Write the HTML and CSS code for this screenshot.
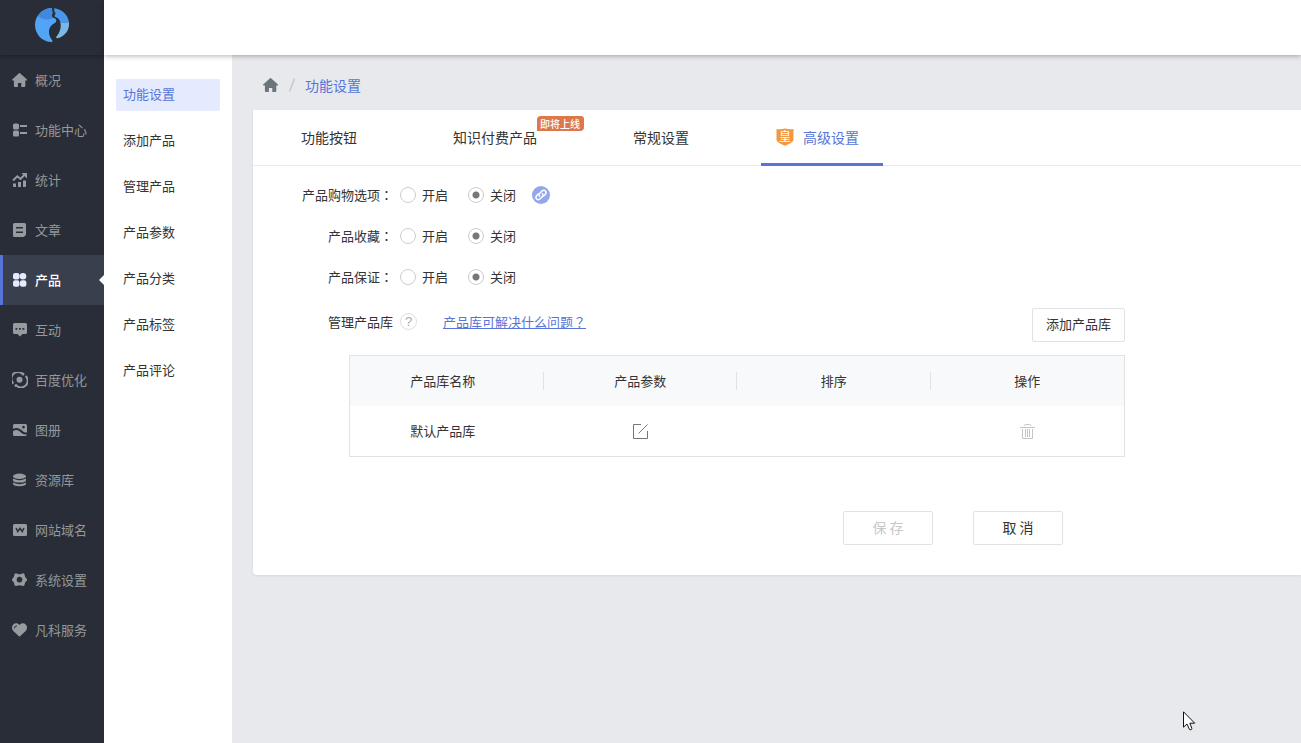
FILE: index.html
```html
<!DOCTYPE html>
<html lang="zh-CN">
<head>
  <meta charset="UTF-8">
  <meta name="viewport" content="width=device-width, initial-scale=1">
  <title>功能设置</title>
  <link rel="stylesheet" href="styles.css">
</head>
<body>
  <aside class="sidebar">
    <div class="logo">
      <svg width="36" height="36" viewBox="0 0 36 36">
        <path fill="#52a5f6" d="M18 1C8 1 1 9 1 18s7 17 16.500 17c1 0 1.300-.6.800-1.500-5-6.500-4.500-14 2.500-17.500 2.300-1.300 1.700-4-.3-4.700-2.500-.6-3.800-1.800-3-3.300 1.200-1.700.8-2.200.3-3.700z"/>
        <path fill="#4189e0" d="M18 1C12 1 7 4.500 4 9c3 3 10 4.500 14 2.500.8-.5 1-.7 1.500-.7-1.500-.8-2-1.800-1.500-2.800 1.200-1.700.8-2.200.3-3.700z"/>
        <path fill="#4a97ee" d="M20 1.200c8 .8 14 6.300 15 14.300-2.500.5-5.500.3-8.500 0-.8-2.500-2-4.500-4.700-5.300-1.500-.5-1.600-1.200-.9-2.200 1-1.500.5-2.500-.5-3.500z"/>
        <path fill="#7ab9e6" d="M26.300 15.300c3 .5 6 .5 8.700 0 .8 8-4.500 14.500-11.500 15.900-1.200.2-1.700-.8-1-1.700C26 25.500 27.500 20.500 26.300 15.300z"/>
      </svg>
    </div>
    <nav class="menu">
      <a href="#"><svg viewBox="0 0 16 16"><path d="M7.500.7 15 7.500c.3.500 0 .9-.5.900H13.300V14q0 .9-.9.900H9.300V11H5.900v3.900H2.800q-.9 0-.9-.9V8.400H.6c-.6 0-.8-.5-.4-.9z"/></svg>概况</a>
      <a href="#"><svg viewBox="0 0 16 16"><rect x="1" y="1.500" width="6" height="6" rx="1.500"/><rect x="1" y="8.500" width="6" height="6" rx="1.500"/><rect x="8" y="3" width="7" height="2"/><rect x="8" y="10" width="7" height="2"/></svg>功能中心</a>
      <a href="#"><svg viewBox="0 0 16 16"><path d="M1 11.500h3V15H2q-1 0-1-1zM6 10h3v5H6zM11 8.500h3V14q0 1-1 1h-2z"/><path class="line" d="M1 8.500 5.300 4.300 8.500 7 13 2.300"/><path d="M9.500 1H15v5.500z"/></svg>统计</a>
      <a href="#"><svg viewBox="0 0 16 16"><path fill-rule="evenodd" d="M2.500 1h10Q14 1 14 2.500V12q0 2-2.500 3h-9Q1 15 1 13.500v-11Q1 1 2.500 1zM4 5v1.500h7V5zm0 4.500V11h7V9.500z"/></svg>文章</a>
      <a href="#" class="active"><svg viewBox="0 0 16 16"><rect x="1" y="1" width="6.500" height="6.500" rx="2.200"/><circle cx="11" cy="4.200" r="3.300"/><rect x="1" y="8.300" width="6.500" height="6.500" rx="2.200"/><rect x="7.900" y="8.300" width="6.500" height="6.500" rx="2.200"/></svg>产品</a>
      <a href="#"><svg viewBox="0 0 16 16"><path fill-rule="evenodd" d="M2.500 1h11Q15 1 15 2.500v8Q15 12 13.500 12H10.500L8 14.500 5.500 12h-3Q1 12 1 10.500v-8Q1 1 2.500 1zM3.500 6v1.800h1.800V6zm3.500 0v1.800h1.800V6zm3.500 0v1.800h1.800V6z"/></svg>互动</a>
      <a href="#"><svg viewBox="0 0 16 16"><circle cx="7.500" cy="7.700" r="3"/><path class="line" d="M1.400 11.500A6.600 6.600 0 0 1 10 1.500M13.600 4A6.600 6.600 0 0 1 5 14"/><circle cx="11" cy="2" r="1.500"/><circle cx="4" cy="13.400" r="1.500"/></svg>百度优化</a>
      <a href="#"><svg viewBox="0 0 16 16"><path fill-rule="evenodd" d="M2.500 2h11Q15 2 15 3.500v6.700c-2 .8-3.500-.2-5-1.700C7.500 6 4.500 5.300 1 6.800V3.500Q1 2 2.500 2zM11.500 3.700a1.400 1.400 0 1 0 .01 0z"/><path d="M1 9.300C4 7.300 6.300 8 8.300 10s4 3 6.700 2.300Q14.700 14 13.500 14h-11Q1 14 1 12.500z"/></svg>图册</a>
      <a href="#"><svg viewBox="0 0 16 16"><ellipse cx="7.500" cy="4.300" rx="6.500" ry="2.700"/><path d="M1 6.500q6.500 3.500 13 0v1.700q0 2.300-6.500 2.300T1 8.200zM1 10.500q6.500 3.300 13 0v1.300q0 2.400-6.500 2.400T1 11.800z"/></svg>资源库</a>
      <a href="#"><svg viewBox="0 0 16 16"><rect x="1" y="2" width="14" height="12" rx="1.500"/><path class="cut" d="M4 6 5.800 9.500 8 6.300l2.200 3.200L12 6"/></svg>网站域名</a>
      <a href="#"><svg viewBox="0 0 16 16"><path fill-rule="evenodd" d="M4 1.300 6 2q1.500.5 3 0l2-.7q1 0 1.500 1L13 4.500q.3.900 1 1.400 1 .8 1 1.800T14 9.500q-.7.500-1 1.400l-.5 2q-.5 1-1.500 1.200l-2-.5q-1.500-.5-3 0L4 14.100q-1-.2-1.500-1.200L2 10.900q-.3-.9-1-1.400-1-.8-1-1.800T1 5.900q.7-.5 1-1.400l.5-2.200q.5-1 1.500-1zM7.500 4.800a2.900 2.900 0 1 0 .01 0z"/></svg>系统设置</a>
      <a href="#"><svg viewBox="0 0 16 16"><path d="M7.500 3C9 1 12 .8 13.700 2.500S15.500 7 13.700 9L7.500 14.800 1.300 9C-.5 7-.4 4.200 1.300 2.500S6 1 7.500 3z"/><path class="cut thin" d="M2.300 6.500Q2.300 4 5 3.800"/></svg>凡科服务</a>
    </nav>
  </aside>

  <div class="page">
    <header class="topbar"></header>
    <div class="content">
      <nav class="submenu">
        <a href="#" class="active">功能设置</a>
        <a href="#">添加产品</a>
        <a href="#">管理产品</a>
        <a href="#">产品参数</a>
        <a href="#">产品分类</a>
        <a href="#">产品标签</a>
        <a href="#">产品评论</a>
      </nav>

      <main>
        <div class="breadcrumb">
          <a href="#" aria-label="首页"><svg width="16" height="16" viewBox="0 0 16 16"><path fill="#6b757c" d="M7.500.7 15 7.500c.3.500 0 .9-.5.900H13.300V14q0 .9-.9.900H9.300V11H5.900v3.900H2.800q-.9 0-.9-.9V8.400H.6c-.6 0-.8-.5-.4-.9z"/></svg></a>
          <svg width="8" height="14" viewBox="0 0 8 14"><path d="M6.500.5 1.500 13.500" stroke="#c6c8cb" stroke-width="1.500"/></svg>
          <a href="#">功能设置</a>
        </div>

        <section class="card">
          <div class="tabs">
            <a href="#">功能按钮</a>
            <a href="#">知识付费产品<span class="badge">即将上线</span></a>
            <a href="#">常规设置</a>
            <a href="#" class="active">
              <svg width="18" height="18" viewBox="0 0 18 18"><path fill="#f2993f" d="M.5 1q4 .8 8.500-.5Q13.500 1.800 17.500 1v11q-1 3-8.500 5.700Q1.500 15 .5 12z"/><text x="9" y="13" text-anchor="middle">皇</text></svg>高级设置
            </a>
          </div>

          <form class="settings">
            <fieldset>
              <legend>产品购物选项<span class="mark">：</span></legend>
              <label><input type="radio" name="shopping">开启</label>
              <label><input type="radio" name="shopping" checked>关闭</label>
              <a href="#" class="jump" aria-label="相关链接"><svg width="18" height="18" viewBox="0 0 18 18"><circle cx="9" cy="9" r="9" fill="#93a8ea"/><g fill="none" stroke="#fff" stroke-width="1.500" stroke-linecap="round"><path d="M7.700 10.300C6.300 9 7 8 8 7l1.800-1.800c2.700-2.300 5.700.7 3.400 3.200L11.700 10"/><path d="M10.300 7.700C11.700 9 11 10 10 11l-1.800 1.800c-2.700 2.300-5.700-.7-3.400-3.200L6.300 8"/></g></svg></a>
            </fieldset>
            <fieldset>
              <legend>产品收藏<span class="mark">：</span></legend>
              <label><input type="radio" name="favorite">开启</label>
              <label><input type="radio" name="favorite" checked>关闭</label>
            </fieldset>
            <fieldset>
              <legend>产品保证<span class="mark">：</span></legend>
              <label><input type="radio" name="guarantee">开启</label>
              <label><input type="radio" name="guarantee" checked>关闭</label>
            </fieldset>

            <div class="library-head">
              <span class="library-title">管理产品库</span>
              <button type="button" class="help" aria-label="帮助">?</button>
              <a href="#">产品库可解决什么问题<span class="mark">？</span></a>
              <button type="button" class="btn add">添加产品库</button>
            </div>

            <table>
              <thead>
                <tr><th>产品库名称</th><th>产品参数</th><th>排序</th><th>操作</th></tr>
              </thead>
              <tbody>
                <tr>
                  <td>默认产品库</td>
                  <td><button type="button" class="icon-btn" aria-label="编辑"><svg width="16" height="16" viewBox="0 0 16 16" fill="none" stroke="#777"><path d="M8 .5H.5v14h14V7"/><path d="M5.500 9.500 14.500.5"/></svg></button></td>
                  <td></td>
                  <td><button type="button" class="icon-btn" aria-label="删除"><svg width="16" height="16" viewBox="0 0 16 16" fill="none" stroke="#c4c4c4"><path d="M0 3.500h15M4 2Q4.500.5 5.500.5h4q1 0 1.500 1.500M2.500 5v9.500h10V5M5.500 5v8M7.500 5v8M9.500 5v8"/></svg></button></td>
                </tr>
              </tbody>
            </table>

            <div class="actions">
              <button type="submit" class="btn" disabled>保 存</button>
              <button type="button" class="btn">取 消</button>
            </div>
          </form>
        </section>
      </main>
    </div>
  </div>

  <svg class="cursor" width="13" height="20" viewBox="0 0 13 20"><path fill="#fff" stroke="#111" d="M.5.800v15.400l3.500-3.200 2.500 5.500q1.500 1 2.500-.8L6.800 12.200h4.900z"/></svg>
</body>
</html>
```
FILE: styles.css
```css
* {
  box-sizing: border-box;
}
body {
  margin: 0;
  display: flex;
  min-height: 100vh;
  font-family: "Noto Sans CJK SC", sans-serif;
  font-size: 13px;
  line-height: 20px;
  color: #333;
  background: #e8e9ed;
}
a {
  color: inherit;
  text-decoration: none;
}
button, input {
  font: inherit;
  color: inherit;
}
svg {
  display: block;
  flex: none;
}

/* left navigation */
.sidebar {
  width: 104px;
  flex: none;
  background: #282d38;
}
.logo {
  height: 55px;
  display: flex;
  justify-content: center;
  padding-top: 7px;
  box-shadow: 0 2px 4px rgba(0, 0, 0, 0.25);
}
.menu a {
  position: relative;
  display: flex;
  align-items: center;
  gap: 7px;
  height: 50px;
  padding-left: 9px;
  border-left: 3px solid transparent;
  color: #94989b;
}
.menu svg {
  width: 16px;
  height: 16px;
  fill: #959b9e;
}
.menu .line {
  fill: none;
  stroke: #959b9e;
  stroke-width: 2;
}
.menu .cut {
  fill: none;
  stroke: #282d38;
  stroke-width: 1.5;
}
.menu .thin {
  stroke-width: 1;
}
.menu .active {
  background: #393f4d;
  border-color: #5874d8;
  color: #fff;
  font-weight: 500;
}
.menu .active svg {
  fill: #e6eaff;
}
.menu .active::after {
  content: "";
  position: absolute;
  right: 0;
  top: 20px;
  border: 5px solid transparent;
  border-left: 0;
  border-right-color: #fff;
}

/* page */
.page {
  flex: 1;
  min-width: 0;
  display: flex;
  flex-direction: column;
}
.topbar {
  position: relative;
  z-index: 1;
  height: 55px;
  background: #fff;
  box-shadow: 0 1px 5px rgba(0, 0, 0, 0.3);
}
.content {
  flex: 1;
  display: flex;
}
.submenu {
  width: 128px;
  flex: none;
  display: flex;
  flex-direction: column;
  gap: 14px;
  padding: 24px 12px;
  background: #fff;
}
.submenu a {
  padding: 5px 7px 7px;
  border-radius: 2px;
}
.submenu .active {
  background: #e6eaff;
  color: #5874d8;
}
main {
  flex: 1;
  min-width: 0;
  padding-left: 21px;
}
.breadcrumb {
  display: flex;
  align-items: center;
  gap: 9px;
  height: 55px;
  padding: 4px 0 0 10px;
  font-size: 14px;
  color: #5874d8;
}
.card {
  background: #fff;
  border-radius: 0 0 0 4px;
  box-shadow: 0 1px 3px rgba(0, 0, 0, 0.08);
}

/* tabs */
.tabs {
  display: flex;
  gap: 96px;
  height: 56px;
  padding-left: 48px;
  border-bottom: 1px solid #e8e9ed;
  font-size: 14px;
}
.tabs a {
  position: relative;
  display: flex;
  align-items: center;
  height: 56px;
  padding-bottom: 2px;
}
.tabs .active {
  gap: 9px;
  margin-left: -24px;
  padding-left: 15px;
  padding-right: 24px;
  color: #5874d8;
  box-shadow: inset 0 -3px #5874d8;
}
.tabs svg {
  overflow: visible;
}
.tabs text {
  font-size: 12px;
  fill: #fff;
}
.badge {
  position: absolute;
  top: 6px;
  left: 84px;
  padding: 0 4px 0 3px;
  border-radius: 4px 3px 4px 0;
  background: #de774b;
  color: #fff;
  font-size: 10px;
  font-weight: 500;
  line-height: 15px;
  white-space: nowrap;
}

/* settings form */
.settings {
  max-width: 872px;
  padding: 19px 0 30px 48px;
}
fieldset {
  display: flex;
  align-items: center;
  height: 20px;
  margin: 0 0 21px;
  padding: 0;
  border: 0;
}
legend {
  float: left;
  width: 92px;
  padding: 0;
  text-align: right;
  white-space: nowrap;
}
/* centred full-width punctuation */
.mark {
  font-family: "Noto Sans CJK TC", sans-serif;
  font-feature-settings: "locl" 0;
}
label {
  display: flex;
  align-items: center;
  gap: 6px;
  margin-right: 20px;
}
legend + label {
  margin-left: 7px;
}
input[type="radio"] {
  appearance: none;
  width: 16px;
  height: 16px;
  margin: 0;
  border: 1px solid #ccc;
  border-radius: 50%;
  background: #fff;
}
input[type="radio"]:checked {
  background: radial-gradient(circle, #777 3px, #fff 4px);
}
.jump {
  margin-left: -4px;
}
.library-head {
  display: flex;
  align-items: flex-start;
  height: 47px;
}
.library-title {
  width: 92px;
  margin-top: 4px;
  text-align: right;
}
.help {
  width: 17px;
  height: 17px;
  margin: 5px 26px 0 7px;
  padding: 0;
  border: 1px solid #ddd;
  border-radius: 50%;
  background: #fff;
  color: #aaa;
  font-family: "Liberation Sans", sans-serif;
  line-height: 15px;
}
.library-head a {
  margin-top: 4px;
  color: #5874d8;
  text-decoration: underline;
}
.btn {
  width: 90px;
  height: 34px;
  padding: 0 0 2px;
  border: 1px solid #e1e2e6;
  border-radius: 2px;
  background: #fff;
  font-size: 14px;
}
.btn:disabled {
  color: #c8c8c8;
}
.add {
  width: 93px;
  margin-left: auto;
  font-size: 13px;
}
table {
  width: calc(100% - 48px);
  margin-left: 48px;
  border: 1px solid #e1e2e6;
  border-spacing: 0;
  table-layout: fixed;
}
th, td {
  height: 50px;
  padding: 0;
  text-align: center;
  font-weight: 400;
}
th:first-child, td:first-child {
  padding-right: 8px;
}
th {
  background: linear-gradient(#e1e2e6, #e1e2e6) right center / 1px 18px no-repeat #f8f9fb;
}
th:last-child {
  background: #f8f9fb;
}
.icon-btn {
  padding: 0 0 0 2px;
  border: 0;
  background: none;
  vertical-align: middle;
}
.actions {
  display: flex;
  justify-content: flex-end;
  gap: 40px;
  margin-top: 54px;
  padding-right: 62px;
}
.cursor {
  position: absolute;
  left: 1183px;
  top: 711px;
}
```
